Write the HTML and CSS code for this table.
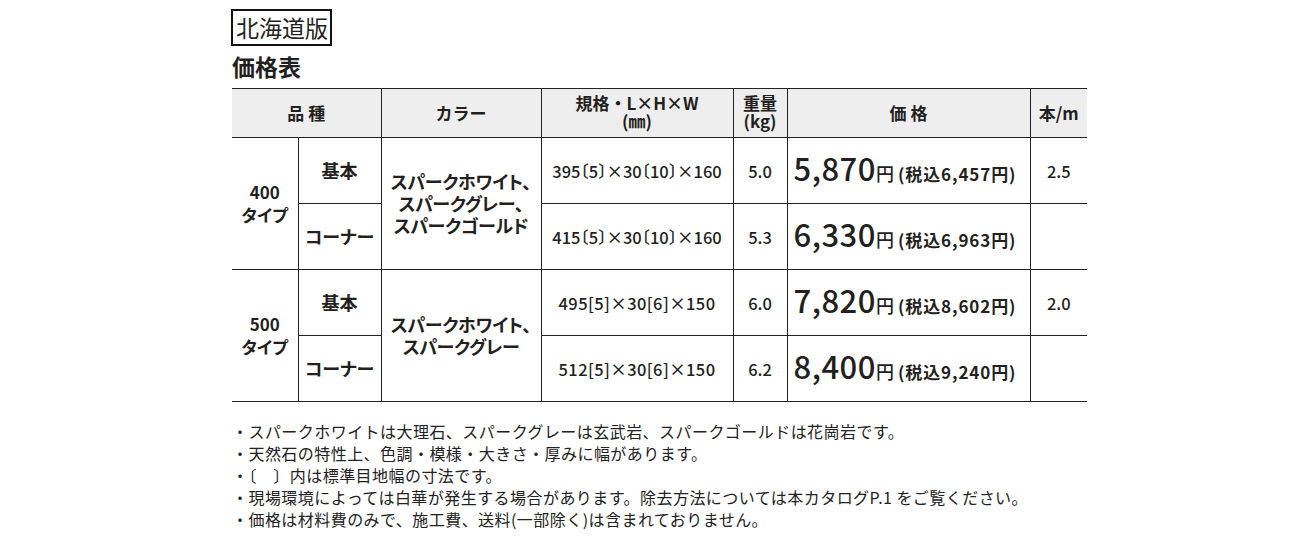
FILE: index.html
```html
<!DOCTYPE html>
<html lang="ja">
<head>
<meta charset="utf-8">
<title>価格表</title>
<link rel="stylesheet" href="styles.css">
</head>
<body>
<div class="page">
  <div class="edition">北海道版</div>
  <h1 class="title">価格表</h1>
  <table class="price-table">
    <colgroup>
      <col class="c1"><col class="c2"><col class="c3"><col class="c4"><col class="c5"><col class="c6"><col class="c7">
    </colgroup>
    <thead>
      <tr>
        <th colspan="2">品 種</th>
        <th>カラー</th>
        <th class="two">規格・L×H×W<br>(㎜)</th>
        <th class="two">重量<br>(kg)</th>
        <th>価 格</th>
        <th>本/m</th>
      </tr>
    </thead>
    <tbody>
      <tr>
        <td rowspan="2" class="type">400<br>タイプ</td>
        <td class="kind">基本</td>
        <td rowspan="2" class="color">スパークホワイト、<br>スパークグレー、<br>スパークゴールド</td>
        <td class="size">395<span class="bk">〔</span>5<span class="bk">〕</span>×30<span class="bk">〔</span>10<span class="bk">〕</span>×160</td>
        <td class="num">5.0</td>
        <td class="price"><span class="big">5,870</span><span class="yen">円</span><span class="tax">(税込6,457円)</span></td>
        <td class="num">2.5</td>
      </tr>
      <tr>
        <td class="kind">コーナー</td>
        <td class="size">415<span class="bk">〔</span>5<span class="bk">〕</span>×30<span class="bk">〔</span>10<span class="bk">〕</span>×160</td>
        <td class="num">5.3</td>
        <td class="price"><span class="big">6,330</span><span class="yen">円</span><span class="tax">(税込6,963円)</span></td>
        <td class="num"></td>
      </tr>
      <tr>
        <td rowspan="2" class="type">500<br>タイプ</td>
        <td class="kind">基本</td>
        <td rowspan="2" class="color">スパークホワイト、<br>スパークグレー</td>
        <td class="size sq">495[5]×30[6]×150</td>
        <td class="num">6.0</td>
        <td class="price"><span class="big">7,820</span><span class="yen">円</span><span class="tax">(税込8,602円)</span></td>
        <td class="num">2.0</td>
      </tr>
      <tr>
        <td class="kind">コーナー</td>
        <td class="size sq">512[5]×30[6]×150</td>
        <td class="num">6.2</td>
        <td class="price"><span class="big">8,400</span><span class="yen">円</span><span class="tax">(税込9,240円)</span></td>
        <td class="num"></td>
      </tr>
    </tbody>
  </table>
  <ul class="notes">
    <li>・スパークホワイトは大理石、スパークグレーは玄武岩、スパークゴールドは花崗岩です。</li>
    <li>・天然石の特性上、色調・模様・大きさ・厚みに幅があります。</li>
    <li>・〔　〕内は標準目地幅の寸法です。</li>
    <li>・現場環境によっては白華が発生する場合があります。除去方法については本カタログP.1 をご覧ください。</li>
    <li>・価格は材料費のみで、施工費、送料(一部除く)は含まれておりません。</li>
  </ul>
</div>
</body>
</html>
```

FILE: styles.css
```css
html, body {
  margin: 0;
  padding: 0;
  background: #fff;
}
body {
  font-family: "Noto Sans CJK JP", "Noto Sans", sans-serif;
  color: #231f20;
}
.page {
  padding: 9px 0 0 231px;
  width: 856px;
}
.edition {
  display: inline-block;
  border: 2px solid #111;
  font-size: 23px;
  line-height: 33px;
  padding: 0 2px 0 3px;
  font-weight: 400;
}
.title {
  margin: 5px 0 0 1px;
  font-size: 23px;
  line-height: 30px;
  font-weight: 700;
}
.price-table {
  margin: 7px 0 0 1px;
  border-collapse: collapse;
  width: 855px;
  table-layout: fixed;
  font-weight: 700;
}
.c1 { width: 66px; }
.c2 { width: 83px; }
.c3 { width: 160px; }
.c4 { width: 192px; }
.c5 { width: 54px; }
.c6 { width: 243px; }
.c7 { width: 57px; }
.price-table th,
.price-table td {
  border: 1px solid #222;
  padding: 0;
  text-align: center;
  vertical-align: middle;
}
.price-table tr > :first-child { border-left: none; }
.price-table tr > :last-child { border-right: none; }
.price-table thead th {
  background: #eeeeee;
  height: 46px;
  font-size: 17px;
  line-height: 18px;
  font-weight: 700;
  border-top: 1.5px solid #222;
}
.price-table thead th.two {
  padding-bottom: 2px;
}
.price-table tbody td {
  height: 63px;
  font-size: 18px;
  line-height: 22px;
}
.price-table tbody tr:last-child td,
.price-table td.type,
.price-table td.color {
  border-bottom: 1.5px solid #222;
}
.price-table td.type,
.price-table td.kind,
.price-table td.color {
  font-feature-settings: "palt";
}
.price-table td.type {
  line-height: 23px;
  font-size: 17px;
  padding-bottom: 2px;
}
.price-table td.kind {
  padding-bottom: 2px;
}
.price-table td.color {
  font-size: 18px;
  line-height: 22px;
  letter-spacing: -0.3px;
  padding-bottom: 2px;
}
.price-table td.size {
  font-size: 16.5px;
  font-weight: 500;
  white-space: nowrap;
}
.price-table td.size.sq {
  letter-spacing: 0.4px;
}
.bk { font-feature-settings: "halt"; }
.price-table td.num {
  font-size: 16.5px;
  font-weight: 500;
}
.price-table td.price {
  text-align: left;
  padding-left: 6px;
  white-space: nowrap;
}
.big {
  font-size: 31px;
  font-weight: 500;
  letter-spacing: 0.5px;
}
.yen {
  font-size: 18px;
  font-weight: 500;
}
.tax {
  font-size: 17px;
  font-weight: 700;
  margin-left: 4px;
  letter-spacing: 0.9px;
}
.notes {
  list-style: none;
  margin: 18px 0 0 1px;
  padding: 0;
  font-size: 16px;
  line-height: 22px;
  color: #222;
  letter-spacing: 0.45px;
}
```
